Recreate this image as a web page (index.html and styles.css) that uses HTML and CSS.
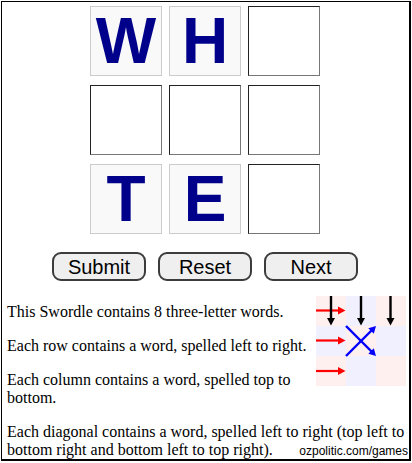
FILE: index.html
```html
<!DOCTYPE html>
<html>
<head>
<meta charset="utf-8">
<link rel="stylesheet" href="styles.css">
</head>
<body>
<div class="frame">
  <div class="board-wrap">
    <div class="board">
      <div class="tile filled">W</div>
      <div class="tile filled">H</div>
      <div class="tile"></div>
      <div class="tile"></div>
      <div class="tile"></div>
      <div class="tile"></div>
      <div class="tile filled">T</div>
      <div class="tile filled">E</div>
      <div class="tile"></div>
    </div>
    <div class="buttons">
      <button class="btn">Submit</button>
      <button class="btn">Reset</button>
      <button class="btn">Next</button>
    </div>
  </div>
  <div class="info">
    <svg class="diagram" width="90" height="90" viewBox="0 0 90 90">
      <rect x="0" y="0" width="30" height="30" fill="#fff0f0"/>
      <rect x="30" y="0" width="30" height="30" fill="#f0f0ff"/>
      <rect x="60" y="0" width="30" height="30" fill="#fff0f0"/>
      <rect x="0" y="30" width="30" height="30" fill="#f0f0ff"/>
      <rect x="30" y="30" width="30" height="30" fill="#fff0f0"/>
      <rect x="60" y="30" width="30" height="30" fill="#f0f0ff"/>
      <rect x="0" y="60" width="30" height="30" fill="#fff0f0"/>
      <rect x="30" y="60" width="30" height="30" fill="#f0f0ff"/>
      <rect x="60" y="60" width="30" height="30" fill="#fff0f0"/>
      <g stroke="#ff0000" stroke-width="2.2" fill="#ff0000">
        <line x1="0" y1="14.5" x2="23" y2="14.5"/>
        <polygon points="22,10.5 22,18.5 29.5,14.5" stroke="none"/>
        <line x1="0" y1="44.5" x2="23" y2="44.5"/>
        <polygon points="22,40.5 22,48.5 29.5,44.5" stroke="none"/>
        <line x1="0" y1="75" x2="23" y2="75"/>
        <polygon points="22,71 22,79 29.5,75" stroke="none"/>
      </g>
      <g stroke="#000" stroke-width="2.4" fill="#000">
        <line x1="15" y1="0" x2="15" y2="23"/>
        <polygon points="11,22 19,22 15,29.5" stroke="none"/>
        <line x1="45" y1="0" x2="45" y2="23"/>
        <polygon points="41,22 49,22 45,29.5" stroke="none"/>
        <line x1="74.5" y1="0" x2="74.5" y2="23"/>
        <polygon points="70.5,22 78.5,22 74.5,29.5" stroke="none"/>
      </g>
      <g stroke="#0000ff" stroke-width="2.4" fill="#0000ff">
        <line x1="30" y1="30" x2="56" y2="56"/>
        <polygon points="60,60 52.3,57.8 57.8,52.3" stroke="none"/>
        <line x1="30" y1="60" x2="56" y2="34"/>
        <polygon points="60,30 57.8,37.7 52.3,32.2" stroke="none"/>
      </g>
    </svg>
    <p>This Swordle contains 8 three-letter words.</p>
    <p>Each row contains a word, spelled left to right.</p>
    <p>Each column contains a word, spelled top to bottom.</p>
    <p class="last"><span>Each diagonal contains a word, spelled left to right (top left to</span> <span>bottom right and bottom left to top right).</span><span class="credit">ozpolitic.com/games</span></p>
  </div>
</div>
</body>
</html>
```
FILE: styles.css
```css
html, body {
  margin: 0;
  padding: 0;
  background: #fff;
}

.frame {
  margin: 1px;
  width: 410px;
  height: 460px;
  box-sizing: border-box;
  border-style: solid;
  border-color: #000;
  border-width: 1px 2px 2px 1px;
  overflow: hidden;
  font-family: "Liberation Serif", "Times New Roman", serif;
  font-size: 16px;
  color: #000;
}

.board-wrap {
  padding: 4px 1px 0 0;
  display: flex;
  flex-direction: column;
  align-items: center;
}

.board {
  display: grid;
  grid-template-columns: repeat(3, 72px);
  grid-auto-rows: 70px;
  column-gap: 7px;
  row-gap: 9px;
}

.tile {
  box-sizing: border-box;
  border: 1px solid;
  border-color: #222 #777 #777 #222;
  background: #fff;
  display: flex;
  align-items: center;
  justify-content: center;
  font-family: "Liberation Sans", Arial, sans-serif;
  font-weight: bold;
  font-size: 64px;
  line-height: 1;
  color: #00008b;
}

.tile.filled {
  border-color: #cccccc;
  background: #f9f9f9;
}

.buttons {
  margin-top: 18px;
  display: flex;
  gap: 12px;
}

.btn {
  box-sizing: border-box;
  width: 94px;
  height: 29px;
  margin: 0;
  padding: 0;
  border: 2px solid #3c3c3c;
  border-radius: 9px;
  background: #efefef;
  font-family: "Liberation Sans", Arial, sans-serif;
  font-size: 20px;
  line-height: 1;
  color: #000;
}

.info {
  display: flow-root;
  margin-top: 15px;
  padding: 0 3px 0 5px;
  line-height: 18px;
}

.diagram {
  float: right;
  display: block;
  margin: 0 0 0 6px;
}

.info p {
  margin: 16px 0;
}

.info p:first-of-type {
  margin-top: 7px;
}

.credit {
  float: right;
  margin: 3px -2px 0 0;
  font-family: "Liberation Sans", Arial, sans-serif;
  font-size: 12px;
  line-height: 14px;
}
```
